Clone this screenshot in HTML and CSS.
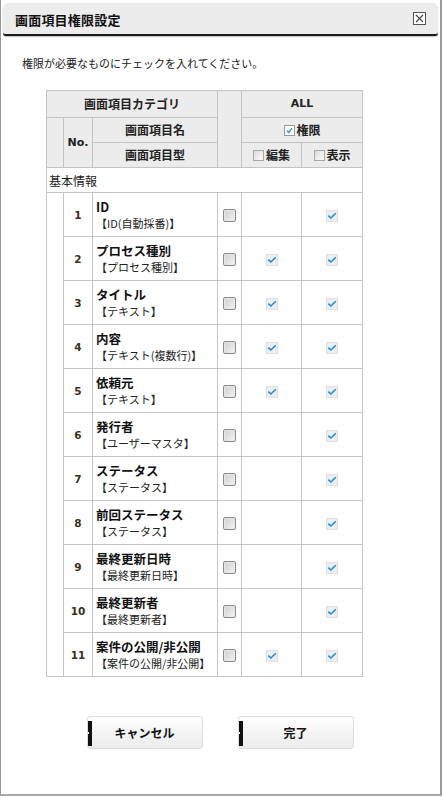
FILE: index.html
```html
<!DOCTYPE html>
<html lang="ja">
<head>
<meta charset="utf-8">
<title>画面項目権限設定</title>
<link rel="stylesheet" href="styles.css">
</head>
<body>
<div class="dialog">
  <div class="titlebar">
    <span class="title">画面項目権限設定</span>
    <span class="close"><svg width="13" height="13" viewBox="0 0 13 13"><rect x="0.5" y="0.5" width="12" height="12" fill="#fff" stroke="#555"/><path d="M3 3 L10 10 M10 3 L3 10" stroke="#444" stroke-width="1.1"/></svg></span>
  </div>
  <p class="lead">権限が必要なものにチェックを入れてください。</p>
  <table class="perm">
    <colgroup>
      <col class="w-ind"><col class="w-no"><col class="w-name"><col class="w-cb"><col class="w-edit"><col class="w-view">
    </colgroup>
    <thead>
      <tr class="h1"><th colspan="3">画面項目カテゴリ</th><th rowspan="3"></th><th colspan="2" class="latin">ALL</th></tr>
      <tr class="h2"><th rowspan="2"></th><th rowspan="2" class="latin">No.</th><th>画面項目名</th><th colspan="2"><span class="hcb on"><svg width="11" height="11" viewBox="0 0 11 11"><path d="M2.5 5.8 L4.6 8 L8.6 3" fill="none" stroke="#2a7fd4" stroke-width="1.5"/></svg></span>権限</th></tr>
      <tr class="h3"><th>画面項目型</th><th><span class="hcb"></span>編集</th><th><span class="hcb"></span>表示</th></tr>
    </thead>
    <tbody>
      <tr class="cat"><td colspan="6">基本情報</td></tr>
      <tr><td rowspan="11" class="indent"></td><td class="no">1</td><td class="name"><b>ID</b><span>【ID(自動採番)】</span></td><td class="c"><span class="cb"></span></td><td class="c"></td><td class="c"><span class="tick"></span></td></tr>
      <tr><td class="no">2</td><td class="name"><b>プロセス種別</b><span>【プロセス種別】</span></td><td class="c"><span class="cb"></span></td><td class="c"><span class="tick"></span></td><td class="c"><span class="tick"></span></td></tr>
      <tr><td class="no">3</td><td class="name"><b>タイトル</b><span>【テキスト】</span></td><td class="c"><span class="cb"></span></td><td class="c"><span class="tick"></span></td><td class="c"><span class="tick"></span></td></tr>
      <tr><td class="no">4</td><td class="name"><b>内容</b><span>【テキスト(複数行)】</span></td><td class="c"><span class="cb"></span></td><td class="c"><span class="tick"></span></td><td class="c"><span class="tick"></span></td></tr>
      <tr><td class="no">5</td><td class="name"><b>依頼元</b><span>【テキスト】</span></td><td class="c"><span class="cb"></span></td><td class="c"><span class="tick"></span></td><td class="c"><span class="tick"></span></td></tr>
      <tr><td class="no">6</td><td class="name"><b>発行者</b><span>【ユーザーマスタ】</span></td><td class="c"><span class="cb"></span></td><td class="c"></td><td class="c"><span class="tick"></span></td></tr>
      <tr><td class="no">7</td><td class="name"><b>ステータス</b><span>【ステータス】</span></td><td class="c"><span class="cb"></span></td><td class="c"></td><td class="c"><span class="tick"></span></td></tr>
      <tr><td class="no">8</td><td class="name"><b>前回ステータス</b><span>【ステータス】</span></td><td class="c"><span class="cb"></span></td><td class="c"></td><td class="c"><span class="tick"></span></td></tr>
      <tr><td class="no">9</td><td class="name"><b>最終更新日時</b><span>【最終更新日時】</span></td><td class="c"><span class="cb"></span></td><td class="c"></td><td class="c"><span class="tick"></span></td></tr>
      <tr><td class="no">10</td><td class="name"><b>最終更新者</b><span>【最終更新者】</span></td><td class="c"><span class="cb"></span></td><td class="c"></td><td class="c"><span class="tick"></span></td></tr>
      <tr><td class="no">11</td><td class="name"><b>案件の公開/非公開</b><span>【案件の公開/非公開】</span></td><td class="c"><span class="cb"></span></td><td class="c"><span class="tick"></span></td><td class="c"><span class="tick"></span></td></tr>
    </tbody>
  </table>
  <div class="actions">
    <button class="btn" type="button"><span class="bar"></span><span class="lbl">キャンセル</span></button>
    <button class="btn" type="button"><span class="bar"></span><span class="lbl">完了</span></button>
  </div>
</div>
</body>
</html>
```
FILE: styles.css
```css
html, body {
  margin: 0;
  padding: 0;
  background: #fff;
}
body {
  font-family: "Noto Sans CJK JP", "DejaVu Sans", sans-serif;
  color: #222;
}
.dialog {
  width: 442px;
  height: 796px;
  box-sizing: border-box;
  border-left: 1px solid #999;
  border-right: 2px solid #9a9a9a;
  border-bottom: 2px solid #a8a8a8;
  background: #fff;
  display: flex;
  flex-direction: column;
}
.titlebar {
  margin: 3px 2px 0 2px;
  height: 33px;
  box-sizing: border-box;
  background: #ececec;
  border-radius: 5px 5px 3px 3px;
  border-bottom: 2px solid #1a1a1a;
  box-shadow: 0 1px 1px rgba(0,0,0,0.25);
  display: flex;
  align-items: center;
  justify-content: space-between;
  padding: 2px 12px 0 12px;
}
.title {
  font-size: 13px;
  font-weight: bold;
  color: #111;
  letter-spacing: 0.2px;
}
.close {
  display: flex;
  margin-top: -3px;
}
.lead {
  margin: 19px 0 0 21px;
  font-size: 11px;
  line-height: 16px;
  color: #222;
}
.perm {
  margin: 19px 0 0 45px;
  width: 316px;
  table-layout: fixed;
  border-collapse: collapse;
  font-size: 12px;
}
.w-ind { width: 17px; }
.w-no { width: 29px; }
.w-name { width: 125px; }
.w-cb { width: 24px; }
.w-edit { width: 60px; }
.w-view { width: 61px; }
.perm th, .perm td {
  border: 1px solid #c4c4c4;
  padding: 0;
}
.perm th {
  background: #ececec;
  font-weight: bold;
  color: #222;
  text-align: center;
  line-height: 16px;
}
.latin {
  font-family: "DejaVu Sans", sans-serif;
  font-size: 11px;
}
.h1 th { height: 26px; }
.h2 th { height: 24px; }
.h3 th { height: 24px; }
.hcb {
  display: inline-block;
  width: 9px;
  height: 9px;
  border: 1px solid #a8a8a8;
  background: linear-gradient(135deg, #dcdcdc, #fafafa);
  vertical-align: -1px;
  margin-right: 2px;
}
.hcb.on {
  width: 11px;
  height: 11px;
  border: none;
  background: none;
  vertical-align: -1px;
}
.hcb.on svg {
  display: block;
  box-sizing: border-box;
  border: 1px solid #9a9a9a;
  background: #fdfdfd;
}
.cat td {
  height: 24px;
  padding-left: 2px;
  font-size: 12px;
  color: #222;
}
.perm tbody tr td { height: 43px; }
.perm tbody tr.cat td { height: 24px; }
.indent { background: #fff; }
.no {
  text-align: center;
  font-family: "DejaVu Sans", sans-serif;
  font-size: 10.5px;
  font-weight: bold;
  color: #3a3020;
}
.name {
  padding: 0 0 0 3px !important;
  vertical-align: middle;
}
.name b, .name span {
  display: block;
  white-space: nowrap;
  line-height: 17px;
}
.name b {
  font-size: 12.5px;
  color: #111;
}
.name span {
  font-size: 11px;
  color: #222;
}
.c {
  text-align: center;
  vertical-align: middle;
}
.cb {
  display: inline-block;
  width: 11px;
  height: 11px;
  border: 1px solid #8c8c8c;
  border-radius: 2px;
  background: linear-gradient(135deg, #cdcdcd, #f6f6f6);
  box-shadow: inset 0 0 0 1px #e6e6e6;
  vertical-align: middle;
  margin-top: -2px;
}
.tick {
  display: inline-block;
  width: 12px;
  height: 12px;
  box-sizing: border-box;
  border: 1px solid #dde1e5;
  background:
    url("data:image/svg+xml,%3Csvg xmlns='http://www.w3.org/2000/svg' width='10' height='10' viewBox='0 0 10 10'%3E%3Cpath d='M1.3 4.6 L3.9 7 L8.8 2.3' fill='none' stroke='%231f88e0' stroke-width='1.5'/%3E%3C/svg%3E") center/10px 10px no-repeat,
    #eceff2;
  vertical-align: middle;
  margin-top: -2px;
}
.actions {
  display: flex;
  justify-content: center;
  gap: 35px;
  margin-top: 39px;
  padding-right: 1px;
}
.btn {
  width: 116px;
  height: 33px;
  box-sizing: border-box;
  display: inline-flex;
  align-items: center;
  padding: 0;
  border: 1px solid #dcdcdc;
  border-radius: 3px;
  background: linear-gradient(#ffffff, #ebebeb);
  font-family: "Noto Sans CJK JP", sans-serif;
  font-size: 12px;
  font-weight: bold;
  color: #111;
  cursor: pointer;
}
.bar {
  width: 4px;
  height: 25px;
  margin-top: 1px;
  background: linear-gradient(#fff, #fff) 0 50% / 1px 2px no-repeat, #111;
}
.lbl {
  flex: 1;
  text-align: center;
  padding-right: 4px;
}
```
